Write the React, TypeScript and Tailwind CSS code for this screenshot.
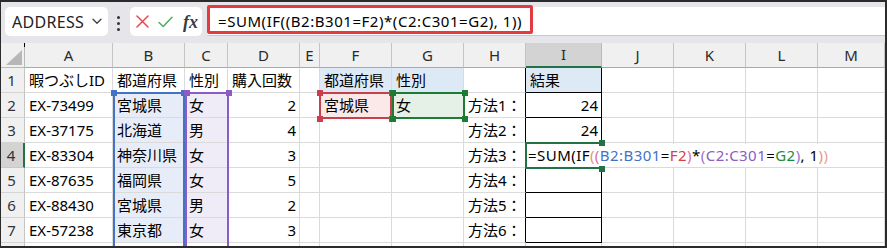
import React from "react";

const WC = [
  "w-[88px]",
  "w-[72px]",
  "w-[43px]",
  "w-[72px]",
  "w-[20px]",
  "w-[72px]",
  "w-[72px]",
  "w-[62px]",
  "w-[76px]",
  "w-[72px]",
  "w-[72px]",
  "w-[72px]",
  "w-[67px]",
];
const LETTERS = ["A", "B", "C", "D", "E", "F", "G", "H", "I", "J", "K", "L", "M"];

const DATA: string[][] = [
  ["暇つぶしID", "都道府県", "性別", "購入回数", "", "都道府県", "性別", "", "結果", "", "", "", ""],
  ["EX-73499", "宮城県", "女", "2", "", "宮城県", "女", "方法1：", "24", "", "", "", ""],
  ["EX-37175", "北海道", "男", "4", "", "", "", "方法2：", "24", "", "", "", ""],
  ["EX-83304", "神奈川県", "女", "3", "", "", "", "方法3：", "", "", "", "", ""],
  ["EX-87635", "福岡県", "女", "5", "", "", "", "方法4：", "", "", "", "", ""],
  ["EX-88430", "宮城県", "男", "2", "", "", "", "方法5：", "", "", "", "", ""],
  ["EX-57238", "東京都", "女", "3", "", "", "", "方法6：", "", "", "", "", ""],
  ["", "", "", "", "", "", "", "", "", "", "", "", ""],
];

function cellBg(r: number, c: number): string {
  if (r === 0 && (c === 5 || c === 6 || c === 8)) return "bg-[#dde9f5]";
  if (r >= 1 && r <= 6 && c === 1) return "bg-[#e7edf8]";
  if (r >= 1 && r <= 6 && c === 2) return "bg-[#efebf7]";
  if (r === 1 && c === 5) return "bg-[#fbe9ea]";
  if (r === 1 && c === 6) return "bg-[#e5f1e6]";
  return "bg-white";
}

function cellBorder(r: number, c: number): string {
  if (r <= 6 && c === 8) return "border-black";
  if (r <= 6 && c === 7) return "border-r-black border-b-[#dadada]";
  return "border-[#dadada]";
}

function cellAlign(r: number, c: number): string {
  if ((c === 3 && r > 0) || (c === 8 && r > 0)) return "justify-end pr-[3px] pl-[4px]";
  return "justify-start pl-[4px] pr-[1px]";
}

function Sq({ cls }: { cls: string }) {
  return <div className={"absolute w-[6px] h-[6px] z-30 " + cls} />;
}

export default function App() {
  return (
    <div
      className="w-[887px] h-[248px] overflow-hidden border-t-2 border-r-2 border-b-2 border-l border-[#2b2b2b] bg-white text-black"
      style={{ fontFamily: '"Noto Sans", "Noto Sans CJK JP", sans-serif' }}
    >
      {/* toolbar */}
      <div className="h-[41px] bg-[#e5e5ea] flex items-start pl-[4px] pt-[5px]">
        <div className="w-[103px] h-[29px] rounded-[5px] bg-white flex items-center justify-between pl-[7px] pr-[6px]">
          <span className="text-[16px] leading-none text-[#222] tracking-[0.3px]">ADDRESS</span>
          <svg width="10" height="7" viewBox="0 0 10 7" fill="none">
            <path d="M1 1.2 L5 5.2 L9 1.2" stroke="#444" strokeWidth="1.4" strokeLinecap="round" strokeLinejoin="round" />
          </svg>
        </div>
        <div className="ml-[9px] mt-[9px] flex flex-col gap-[3px]">
          <div className="w-[3px] h-[3px] rounded-full bg-[#333]" />
          <div className="w-[3px] h-[3px] rounded-full bg-[#333]" />
          <div className="w-[3px] h-[3px] rounded-full bg-[#333]" />
        </div>
        <div className="ml-[10px] w-[72px] h-[29px] rounded-[5px] bg-white flex items-center pl-[6px]">
          <svg width="13" height="13" viewBox="0 0 13 13" fill="none">
            <path d="M1 1 L12 12 M12 1 L1 12" stroke="#e5484d" strokeWidth="1.5" strokeLinecap="round" />
          </svg>
          <svg className="ml-[9px]" width="15" height="12" viewBox="0 0 15 12" fill="none">
            <path d="M1 6.5 L5.2 10.5 L14 1.2" stroke="#4cae5c" strokeWidth="1.5" strokeLinecap="round" strokeLinejoin="round" />
          </svg>
          <span
            className="ml-[10px] text-[18px] italic font-semibold leading-none text-[#3c3c3c]"
            style={{ fontFamily: '"Liberation Serif", "DejaVu Serif", serif' }}
          >
            fx
          </span>
        </div>
        <div className="ml-[5px] flex-1 h-[29px] bg-white border-b border-[#c9c9c9] relative flex items-center pl-[11px]">
          <span className="text-[15px] leading-none tracking-[0.55px] text-black whitespace-nowrap">
            =SUM(IF((B2:B301=F2)*(C2:C301=G2), 1))
          </span>
          <div className="absolute left-0 top-[-2px] w-[326px] h-[29px] border-[3px] border-[#e33b3f] rounded-[2px]" />
        </div>
      </div>

      {/* sheet */}
      <div className="relative">
        {/* header row */}
        <div className="flex h-[25px]">
          <div className="w-[24px] shrink-0 h-full bg-[#f0f0f0] border-r border-b border-[#b9b9b9] relative">
            <svg className="absolute right-[2px] bottom-[2px]" width="16" height="15" viewBox="0 0 16 15">
              <polygon points="16,0 16,15 0,15" fill="#b7b7b7" />
            </svg>
            <div className="absolute right-[-1px] top-0 w-[1px] h-[4px] bg-black" />
          </div>
          {LETTERS.map((l, c) =>
            c === 8 ? (
              <div
                key={l}
                className={WC[c] + " shrink-0 h-full bg-[#d3d3d3] border-r border-r-[#b9b9b9] border-b-2 border-b-[#217346] flex items-center justify-center text-[15px] text-[#2a2a2a]"}
              >
                {l}
              </div>
            ) : (
              <div
                key={l}
                className={WC[c] + " shrink-0 h-full bg-[#f0f0f0] border-r border-r-[#c4c4c4] border-b border-b-[#a9a9a9] flex items-center justify-center text-[15px] text-[#2a2a2a]"}
              >
                {l}
              </div>
            )
          )}
        </div>

        {DATA.map((row, r) => (
          <div key={r} className="flex h-[25px]">
            {r === 3 ? (
              <div className="w-[24px] shrink-0 h-full bg-[#d3d3d3] border-r-2 border-r-[#217346] border-b border-b-[#c8c8c8] flex items-center justify-center pr-[2px] text-[15px] text-[#333]">
                {r + 1}
              </div>
            ) : (
              <div className="w-[24px] shrink-0 h-full bg-[#f0f0f0] border-r border-r-[#c4c4c4] border-b border-b-[#d4d4d4] flex items-center justify-center pr-[2px] text-[15px] text-[#333]">
                {r < 7 ? r + 1 : ""}
              </div>
            )}
            {row.map((v, c) => (
              <div
                key={c}
                className={
                  WC[c] +
                  " shrink-0 h-full border-r border-b flex items-center whitespace-nowrap overflow-hidden text-[15px] leading-none " +
                  cellBorder(r, c) +
                  " " +
                  cellBg(r, c) +
                  " " +
                  cellAlign(r, c)
                }
              >
                {v}
              </div>
            ))}
          </div>
        ))}

        {/* B range (blue) */}
        <div className="absolute left-[112px] top-[49px] w-[72px] h-[200px] border-2 border-[#4472c4] z-20" />
        <Sq cls="left-[110px] top-[47px] bg-[#4472c4]" />
        <Sq cls="left-[180px] top-[47px] bg-[#4472c4]" />
        {/* C range (purple) */}
        <div className="absolute left-[184px] top-[49px] w-[44px] h-[200px] border-2 border-[#8b5cc4] z-20" />
        <Sq cls="left-[183px] top-[47px] bg-[#8b5cc4]" />
        <Sq cls="left-[225px] top-[47px] bg-[#8b5cc4]" />
        {/* F2 (red) */}
        <div className="absolute left-[318px] top-[49px] w-[73px] h-[27px] border-2 border-[#c8404a] z-20" />
        <Sq cls="left-[316px] top-[47px] bg-[#c8404a]" />
        <Sq cls="left-[316px] top-[73px] bg-[#c8404a]" />
        <Sq cls="left-[388px] top-[47px] bg-[#c8404a]" />
        <Sq cls="left-[388px] top-[73px] bg-[#c8404a]" />
        {/* G2 (green) */}
        <div className="absolute left-[391px] top-[49px] w-[73px] h-[27px] border-2 border-[#1e7b34] z-20" />
        <Sq cls="left-[389px] top-[47px] bg-[#1e7b34]" />
        <Sq cls="left-[389px] top-[73px] bg-[#1e7b34]" />
        <Sq cls="left-[461px] top-[47px] bg-[#1e7b34]" />
        <Sq cls="left-[461px] top-[73px] bg-[#1e7b34]" />

        {/* active cell I4 in edit mode */}
        <div className="absolute left-[526px] top-[101px] h-[23px] bg-white z-10 flex items-center pl-[1px] pr-[5px] whitespace-nowrap text-[15px] leading-none tracking-[0.45px]">
          <span className="text-black">=SUM(IF</span>
          <span className="text-[#e8957a]">(</span>
          <span className="text-[#d56fb0]">(</span>
          <span className="text-[#3f73c8]">B2:B301</span>
          <span className="text-black">=</span>
          <span className="text-[#d2424c]">F2</span>
          <span className="text-[#d56fb0]">)</span>
          <span className="text-black">*</span>
          <span className="text-[#9a74cf]">(</span>
          <span className="text-[#8a5cc4]">C2:C301</span>
          <span className="text-black">=</span>
          <span className="text-[#1e8a3c]">G2</span>
          <span className="text-[#9a74cf]">)</span>
          <span className="text-black">, 1</span>
          <span className="text-[#e8957a]">)</span>
          <span className="text-[#eca0a0]">)</span>
        </div>
        <div className="absolute left-[524px] top-[99px] w-[78px] h-[27px] border-2 border-r-0 border-[#217346] z-20" />
        <Sq cls="left-[598px] top-[97px] w-[5px] h-[5px] bg-[#217346]" />
        <Sq cls="left-[598px] top-[123px] bg-[#217346]" />
      </div>
    </div>
  );
}
